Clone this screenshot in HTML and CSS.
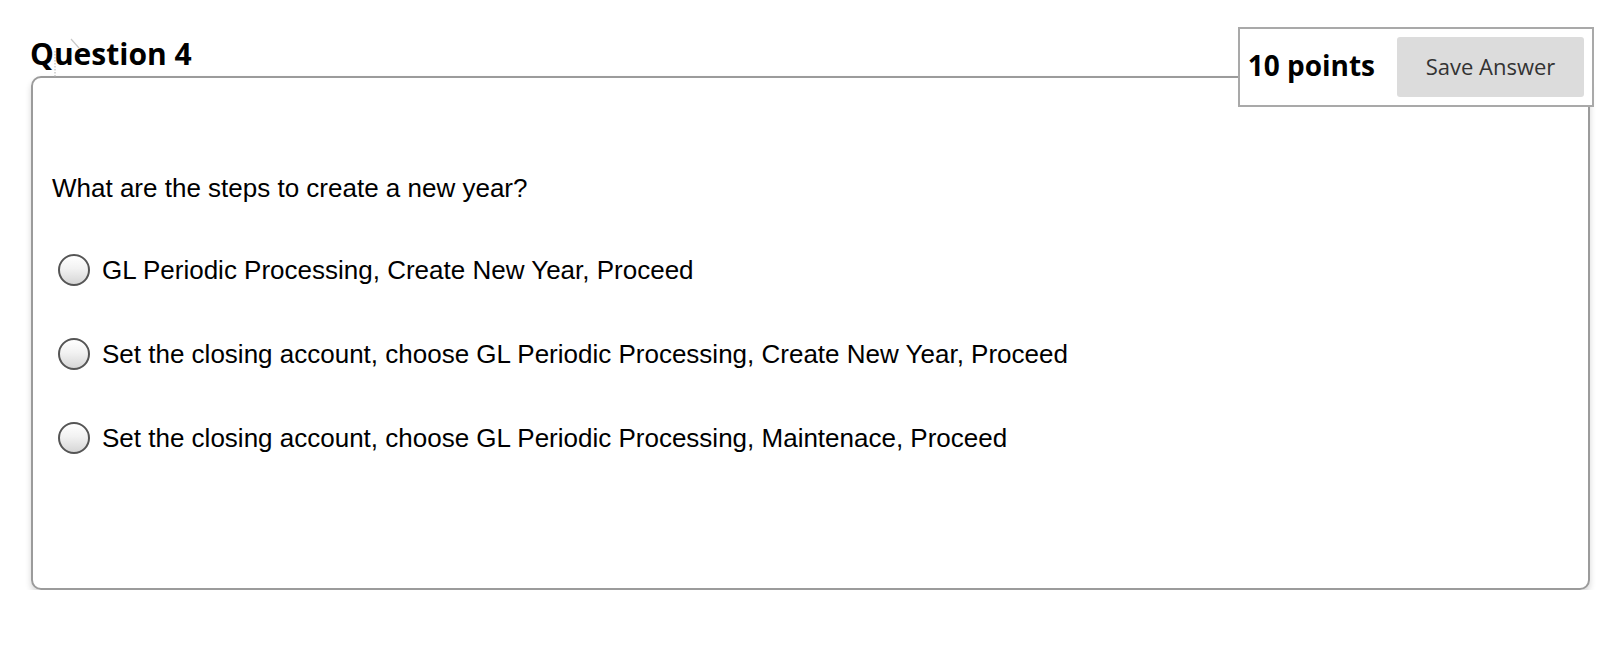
FILE: index.html
```html
<!DOCTYPE html>
<html lang="en">
<head>
<meta charset="utf-8">
<title>Question 4</title>
<link rel="stylesheet" href="styles.css">
</head>
<body>
<div class="page">
  <section class="question">
    <h2 class="q-title">Question 4</h2>
    <svg class="q-mark" width="30" height="42" viewBox="0 0 30 42" aria-hidden="true">
      <path d="M18 2 L26 11" stroke="#c8c8c8" stroke-width="1.2" fill="none"/>
      <path d="M2 14 L2 40" stroke="#bdbdbd" stroke-width="1.2" stroke-dasharray="1.5 1.5" fill="none"/>
    </svg>
    <div class="points-box">
      <span class="points">10 points</span>
      <button class="save-btn" type="button">Save Answer</button>
    </div>
    <div class="card">
      <p class="prompt">What are the steps to create a new year?</p>
      <ul class="options">
        <li class="option"><input class="radio" type="radio" name="q4" id="o1"><label for="o1">GL Periodic Processing, Create New Year, Proceed</label></li>
        <li class="option"><input class="radio" type="radio" name="q4" id="o2"><label for="o2">Set the closing account, choose GL Periodic Processing, Create New Year, Proceed</label></li>
        <li class="option"><input class="radio" type="radio" name="q4" id="o3"><label for="o3">Set the closing account, choose GL Periodic Processing, Maintenace, Proceed</label></li>
      </ul>
    </div>
  </section>
</div>
</body>
</html>
```

FILE: styles.css
```css
html, body {
  margin: 0;
  padding: 0;
  background: #ffffff;
}

.page {
  padding: 35px 0 0 31px;
  width: 1559px;
}

.question {
  position: relative;
}

.q-title {
  margin: 0 0 3px -1px;
  font-family: "Open Sans", "Liberation Sans", sans-serif;
  font-weight: 700;
  font-size: 30px;
  line-height: 38px;
  color: #000;
}

.q-mark {
  position: absolute;
  left: 22px;
  top: 2px;
}

.points-box {
  position: absolute;
  top: -8px;
  right: -4px;
  display: flex;
  align-items: center;
  gap: 22px;
  padding: 8px;
  background: #fff;
  border: 2px solid #a9a9a9;
  z-index: 2;
}

.points {
  font-family: "Open Sans", "Liberation Sans", sans-serif;
  font-weight: 700;
  font-size: 28px;
  color: #000;
  margin-bottom: 4px;
}

.save-btn {
  width: 187px;
  height: 60px;
  border: none;
  border-radius: 3px;
  background: #dcdcdc;
  font-family: "Open Sans", "Liberation Sans", sans-serif;
  font-size: 22px;
  color: #333;
  padding: 0 0 2px 0;
}

.card {
  height: 514px;
  box-sizing: border-box;
  border: 2px solid #9b9b9b;
  border-radius: 10px;
  box-shadow: 0 4px 6px rgba(0, 0, 0, 0.16);
  padding: 95px 19px 0 19px;
}

.prompt {
  margin: 0;
  font-family: "Liberation Sans", Arial, sans-serif;
  font-size: 26px;
  line-height: 30px;
  color: #000;
}

.options {
  list-style: none;
  margin: 47px 0 0 0;
  padding: 0;
  display: flex;
  flex-direction: column;
  gap: 44px;
}

.option {
  display: flex;
  align-items: center;
  height: 40px;
  font-family: "Liberation Sans", Arial, sans-serif;
  font-size: 26px;
  color: #000;
}

.radio {
  appearance: none;
  -webkit-appearance: none;
  width: 32px;
  height: 32px;
  margin: 0 12px 0 6px;
  border: 2px solid #555;
  border-radius: 50%;
  background: linear-gradient(to bottom, #ffffff 0%, #f2f2f2 45%, #d6d6d6 100%);
  box-sizing: border-box;
  flex: none;
}
```
